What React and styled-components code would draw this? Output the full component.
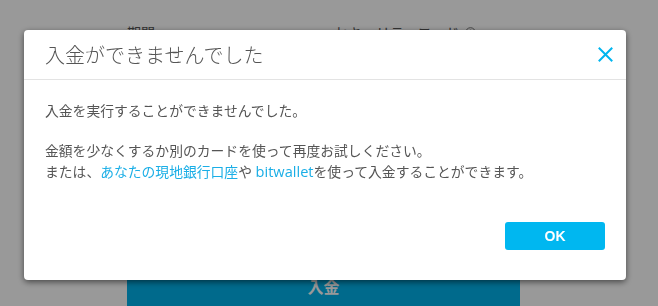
import React from "react";
import styled, { createGlobalStyle } from "styled-components";

const Global = createGlobalStyle`
  html, body { margin: 0; padding: 0; }
  body {
    width: 658px;
    height: 306px;
    overflow: hidden;
    background: #ffffff;
    font-family: "Noto Sans CJK JP", "Noto Sans", sans-serif;
  }
`;

const Page = styled.div`
  width: 658px;
  height: 306px;
  box-sizing: border-box;
  padding: 22px 0 0 127px;
  background: #fff;
`;

const LabelRow = styled.div`
  display: grid;
  grid-template-columns: 207px auto;
  align-items: center;
  height: 20px;
`;

const FieldLabel = styled.span`
  display: inline-flex;
  align-items: center;
  gap: 6px;
  font-size: 14px;
  line-height: 20px;
  color: #555;
`;

const SubmitButton = styled.button`
  display: block;
  width: 393px;
  height: 44px;
  margin-top: 222px;
  border: none;
  border-radius: 0;
  background: #00b1e9;
  color: #fff;
  font-family: inherit;
  font-size: 16px;
  font-weight: 700;
  padding: 0;
`;

const Overlay = styled.div`
  position: fixed;
  inset: 0;
  background: rgba(0, 0, 0, 0.4);
  padding: 30px 0 0 24px;
  box-sizing: border-box;
`;

const Dialog = styled.div`
  width: 602px;
  height: 250px;
  background: #fff;
  border-radius: 4px;
  box-shadow: 0 2px 6px rgba(0, 0, 0, 0.55);
  display: flex;
  flex-direction: column;
  box-sizing: border-box;
`;

const Header = styled.div`
  display: flex;
  align-items: center;
  justify-content: space-between;
  height: 49px;
  padding: 0 12px 0 21px;
  border-bottom: 1px solid #e3e3e3;
`;

const Title = styled.h2`
  margin: 0;
  font-size: 20px;
  font-weight: 300;
  color: #555;
  line-height: 49px;
`;

const CloseButton = styled.button`
  width: 18px;
  height: 18px;
  padding: 0;
  border: none;
  background: transparent;
  display: flex;
  align-items: center;
  justify-content: center;
`;

const Body = styled.div`
  padding: 21px 21px 19px;
  font-family: "Open Sans", "Noto Sans CJK JP", sans-serif;
  font-size: 13.8px;
  line-height: 20px;
  color: #555;
`;

const Paragraph = styled.p`
  margin: 0;
  & + & { margin-top: 20px; }
`;

const Link = styled.a`
  color: #1aaee6;
  text-decoration: none;
  font-size: ${(p) => (p.$latin ? "14.6px" : "inherit")};
`;

const Footer = styled.div`
  display: flex;
  justify-content: flex-end;
  padding: 21px 21px 0;
`;

const OkButton = styled.button`
  width: 100px;
  height: 28px;
  border: none;
  border-radius: 3px;
  background: #00b7f0;
  color: #fff;
  font-family: "Liberation Sans", "Noto Sans", sans-serif;
  font-size: 14px;
  font-weight: 700;
  padding: 0;
`;

const InfoIcon = () => (
  <svg width="11" height="11" viewBox="0 0 11 11">
    <circle cx="5.5" cy="5.5" r="4.8" fill="none" stroke="#777" strokeWidth="1" />
    <circle cx="5.5" cy="3.4" r="0.8" fill="#777" />
    <rect x="4.9" y="4.8" width="1.2" height="3.6" fill="#777" />
  </svg>
);

export default function App() {
  return (
    <>
      <Global />
      <Page>
        <LabelRow>
          <FieldLabel>期間</FieldLabel>
          <FieldLabel>
            セキュリティコード
            <InfoIcon />
          </FieldLabel>
        </LabelRow>
        <SubmitButton>入金</SubmitButton>
      </Page>
      <Overlay>
        <Dialog role="dialog">
          <Header>
            <Title>入金ができませんでした</Title>
            <CloseButton aria-label="閉じる">
              <svg width="15" height="15" viewBox="0 0 15 15">
                <path d="M1.5 1.5 L13.5 13.5 M13.5 1.5 L1.5 13.5" stroke="#00b5ef" strokeWidth="2" strokeLinecap="square" />
              </svg>
            </CloseButton>
          </Header>
          <Body>
            <Paragraph>入金を実行することができませんでした。</Paragraph>
            <Paragraph>
              金額を少なくするか別のカードを使って再度お試しください。
              <br />
              または、<Link href="#">あなたの現地銀行口座</Link>や <Link href="#" $latin>bitwallet</Link>を使って入金することができます。
            </Paragraph>
          </Body>
          <Footer>
            <OkButton>OK</OkButton>
          </Footer>
        </Dialog>
      </Overlay>
    </>
  );
}
